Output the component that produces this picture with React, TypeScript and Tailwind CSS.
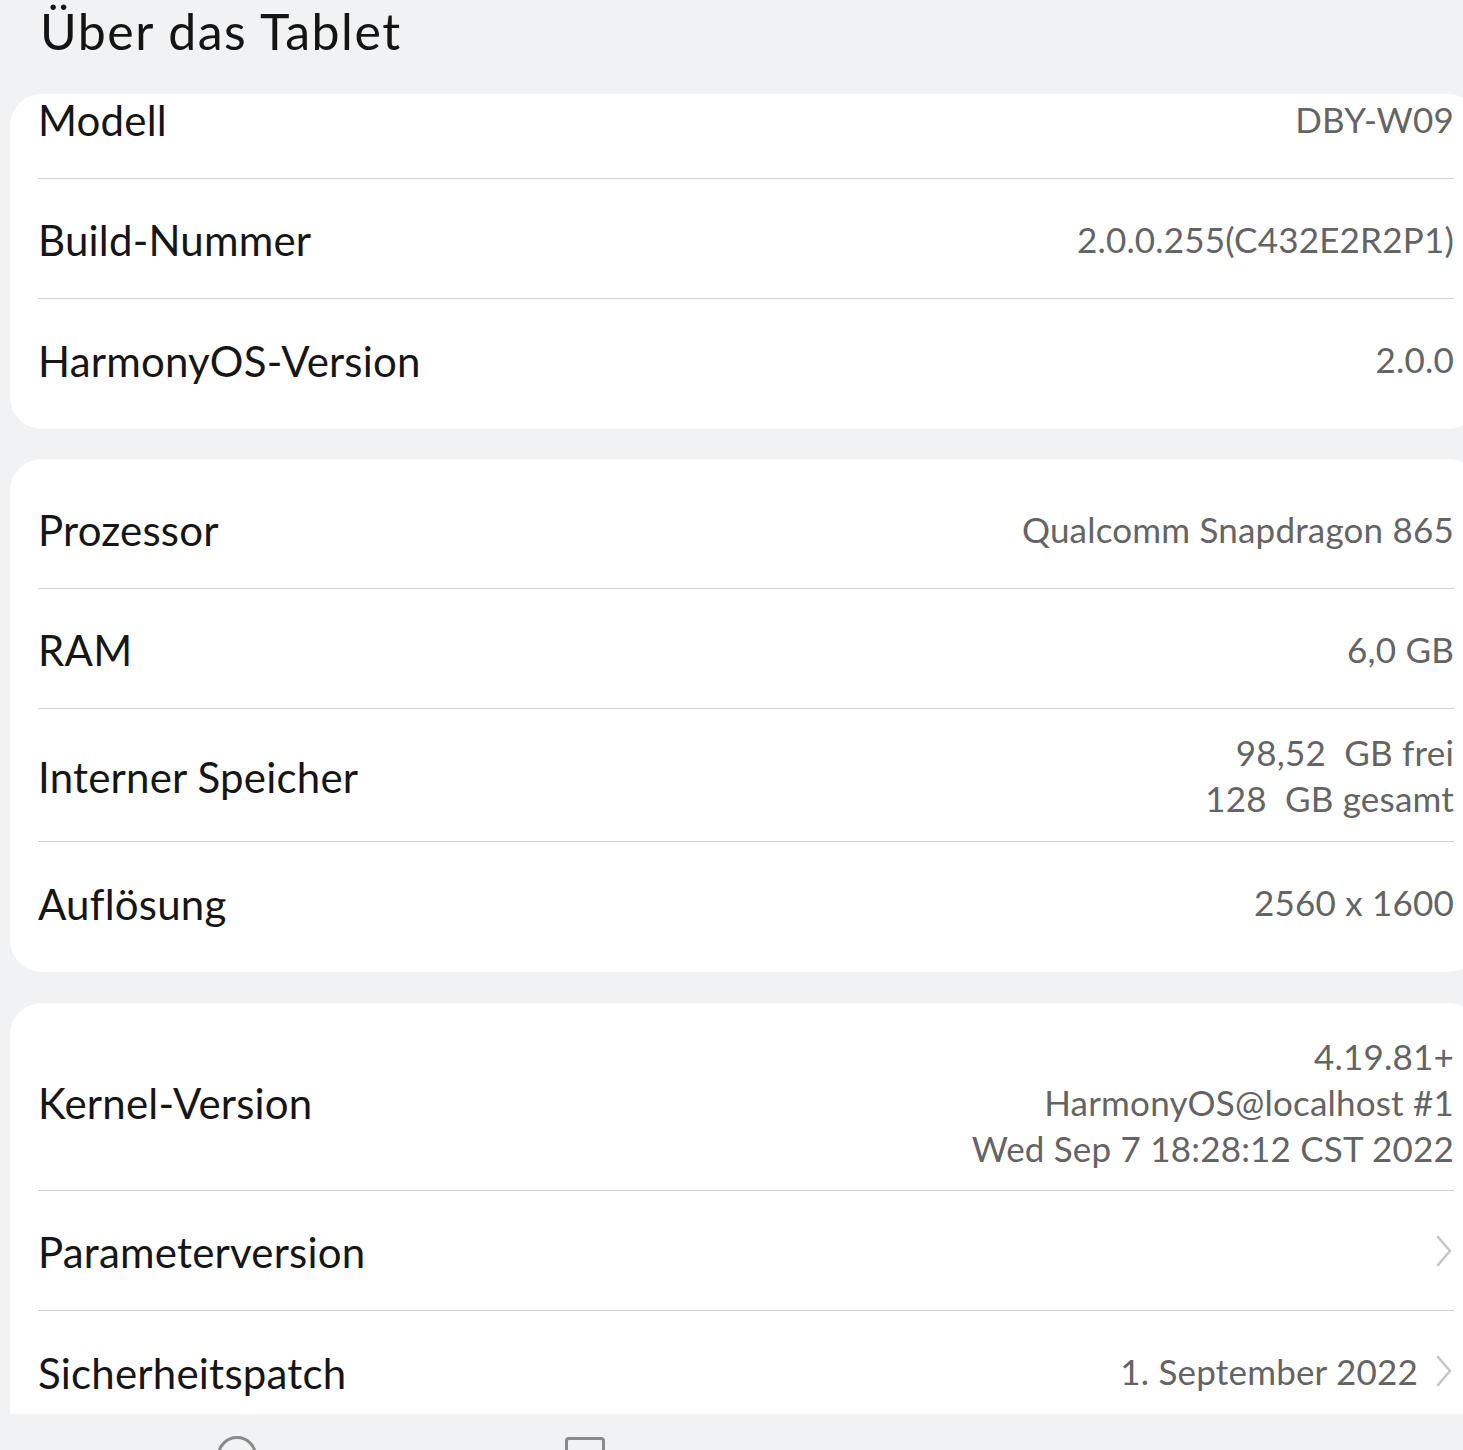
import React from "react";

const font = { fontFamily: "Lato, 'Noto Sans', sans-serif" };

function Chevron() {
  return (
    <svg width="20" height="32" viewBox="0 0 20 32" className="shrink-0">
      <path d="M4 2 L16 16 L4 30" fill="none" stroke="#c6c6c6" strokeWidth="2.6" strokeLinecap="round" strokeLinejoin="round" />
    </svg>
  );
}

function Row({
  label,
  value,
  h = "h-[120px]",
  divider = true,
  chevron = false,
}: {
  label: string;
  value?: React.ReactNode;
  h?: string;
  divider?: boolean;
  chevron?: boolean;
}) {
  return (
    <div className={`${h} flex items-center justify-between ${divider ? "border-b border-[#d2d2d2]" : ""}`}>
      <span className="text-[42px] tracking-[0.2px] text-[#161616] leading-none pt-[3px]">{label}</span>
      <div className="flex items-center gap-[16px]">
        {value !== undefined && (
          <div className="text-right text-[35px] tracking-[0.2px] leading-[46px] text-[#646464] whitespace-pre">{value}</div>
        )}
        {chevron && <Chevron />}
      </div>
    </div>
  );
}

export default function App() {
  return (
    <div className="w-[1463px] h-[1450px] overflow-hidden bg-[#f1f2f3] flex flex-col relative" style={font}>
      <div className="h-[94px] shrink-0 px-[40px] relative z-10">
        <h1 className="text-[50px] tracking-[1.5px] leading-none text-[#141414] pt-[6px]">Über das Tablet</h1>
      </div>
      <div className="flex-1 overflow-hidden">
        <div className="ml-[10px] w-[1470px] bg-white rounded-[32px] overflow-hidden h-[335px] pl-[28px] pr-[26px]">
          <div className="mt-[-35px]">
            <Row label="Modell" value="DBY-W09" />
            <Row label="Build-Nummer" value="2.0.0.255(C432E2R2P1)" />
            <Row label="HarmonyOS-Version" value="2.0.0" divider={false} />
          </div>
        </div>
        <div className="mt-[30px] ml-[10px] w-[1470px] bg-white rounded-[32px] pl-[28px] pr-[26px] py-[10px]">
          <Row label="Prozessor" value="Qualcomm Snapdragon 865" />
          <Row label="RAM" value="6,0 GB" />
          <Row label="Interner Speicher" value={"98,52  GB frei\n128  GB gesamt"} h="h-[133px]" />
          <Row label="Auflösung" value="2560 x 1600" divider={false} />
        </div>
        <div className="mt-[31px] ml-[10px] w-[1470px] bg-white rounded-[32px] pl-[28px] pr-[26px] py-[10px]">
          <Row
            label="Kernel-Version"
            value={"4.19.81+\nHarmonyOS@localhost #1\nWed Sep 7 18:28:12 CST 2022"}
            h="h-[178px]"
          />
          <Row label="Parameterversion" chevron />
          <Row label="Sicherheitspatch" value="1. September 2022" chevron divider={false} />
        </div>
      </div>
      <div className="h-[36px] shrink-0 bg-[#f1f2f3] relative z-10 overflow-hidden">
        <div className="absolute left-[217px] top-[22px] w-[40px] h-[40px] rounded-full border-[3px] border-[#8a8a8a]" />
        <div className="absolute left-[565px] top-[23px] w-[40px] h-[40px] rounded-[4px] border-[3px] border-[#8a8a8a]" />
      </div>
    </div>
  );
}
